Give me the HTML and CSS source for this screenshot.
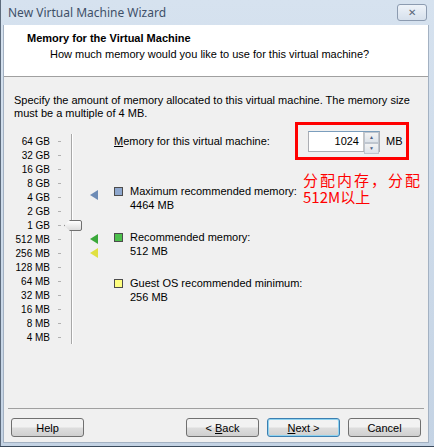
FILE: index.html
```html
<!DOCTYPE html>
<html lang="en">
<head>
    <meta charset="UTF-8">
    <title>New Virtual Machine Wizard</title>
    <link rel="stylesheet" href="styles.css">
</head>
<body>
    <div class="window">
        <div class="titlebar">
            <span class="title">New Virtual Machine Wizard</span>
            <span class="close">&#x2715;</span>
        </div>

        <div class="client">
            <div class="header">
                <h1>Memory for the Virtual Machine</h1>
                <p>How much memory would you like to use for this virtual machine?</p>
            </div>

            <div class="content">
                <p class="intro">Specify the amount of memory allocated to this virtual machine. The memory size must be a multiple of 4 MB.</p>

                <div class="memory">
                    <!-- slider scale -->
                    <div class="scale">
                        <div class="row"><span class="lbl">64 GB</span><span class="tick"></span><span class="track"></span><span class="mark"></span></div>
                        <div class="row"><span class="lbl">32 GB</span><span class="tick"></span><span class="track"></span><span class="mark"></span></div>
                        <div class="row"><span class="lbl">16 GB</span><span class="tick"></span><span class="track"></span><span class="mark"></span></div>
                        <div class="row"><span class="lbl">8 GB</span><span class="tick"></span><span class="track"></span><span class="mark"></span></div>
                        <div class="row"><span class="lbl">4 GB</span><span class="tick"></span><span class="track"></span><span class="mark"><span class="arrow blue up"></span></span></div>
                        <div class="row"><span class="lbl">2 GB</span><span class="tick"></span><span class="track"></span><span class="mark"></span></div>
                        <div class="row"><span class="lbl">1 GB</span><span class="tick"></span><span class="track"><span class="thumb"></span></span><span class="mark"></span></div>
                        <div class="row"><span class="lbl">512 MB</span><span class="tick"></span><span class="track"></span><span class="mark"><span class="arrow green"></span></span></div>
                        <div class="row"><span class="lbl">256 MB</span><span class="tick"></span><span class="track"></span><span class="mark"><span class="arrow yellow"></span></span></div>
                        <div class="row"><span class="lbl">128 MB</span><span class="tick"></span><span class="track"></span><span class="mark"></span></div>
                        <div class="row"><span class="lbl">64 MB</span><span class="tick"></span><span class="track"></span><span class="mark"></span></div>
                        <div class="row"><span class="lbl">32 MB</span><span class="tick"></span><span class="track"></span><span class="mark"></span></div>
                        <div class="row"><span class="lbl">16 MB</span><span class="tick"></span><span class="track"></span><span class="mark"></span></div>
                        <div class="row"><span class="lbl">8 MB</span><span class="tick"></span><span class="track"></span><span class="mark"></span></div>
                        <div class="row"><span class="lbl">4 MB</span><span class="tick"></span><span class="track"></span><span class="mark"></span></div>
                    </div>

                    <div class="info">
                        <div class="field">
                            <span class="field-label"><u>M</u>emory for this virtual machine:</span>
                            <div class="spin">
                                <span class="spin-value">1024</span>
                                <span class="spin-btns">
                                    <span class="spin-btn">&#9650;</span>
                                    <span class="spin-btn">&#9660;</span>
                                </span>
                            </div>
                            <span class="unit">MB</span>
                            <div class="redbox"></div>
                            <div class="note">
                                <span class="note-line">分配内存，分配</span>
                                <span class="note-line narrow">512M以上</span>
                            </div>
                        </div>

                        <div class="legend max">
                            <span class="sq blue"></span>
                            <div>Maximum recommended memory:<br>4464 MB</div>
                        </div>
                        <div class="legend rec">
                            <span class="sq green"></span>
                            <div>Recommended memory:<br>512 MB</div>
                        </div>
                        <div class="legend min">
                            <span class="sq yellow"></span>
                            <div>Guest OS recommended minimum:<br>256 MB</div>
                        </div>
                    </div>
                </div>
            </div>

            <div class="footer">
                <button class="btn">Help</button>
                <span class="spacer"></span>
                <button class="btn">&lt; <u>B</u>ack</button>
                <button class="btn default"><u>N</u>ext &gt;</button>
                <button class="btn">Cancel</button>
            </div>
        </div>
    </div>
</body>
</html>
```

FILE: styles.css
```css
body {
    margin: 0;
    background: #3b4a5c;
    font-family: 'Liberation Sans', Arial, sans-serif;
    font-size: 11px;
    color: #000;
}

.window {
    width: 434px;
    height: 446px;
    background: linear-gradient(#d6e2ef, #c4d3e4);
    border-left: 1px solid #5d6b7c;
    box-sizing: border-box;
    display: flex;
    flex-direction: column;
}

.titlebar {
    height: 25px;
    display: flex;
    align-items: center;
    justify-content: space-between;
    padding: 0 7px 0 7px;
    flex-shrink: 0;
}

.title {
    font-family: 'Noto Sans', sans-serif;
    font-size: 12px;
    color: #3f5068;
    margin-top: -1px;
}

.close {
    width: 28px;
    height: 15px;
    border: 1px solid #8c9bb0;
    border-radius: 3px;
    background: linear-gradient(#eef3f9, #d6e0ec);
    font-size: 10px;
    color: #5a6678;
    text-align: center;
    line-height: 15px;
    margin-top: -1px;
}

.client {
    flex: 1;
    margin: 0 5px 3px 2px;
    background: #f0f0f0;
    border: 1px solid #a3b1c2;
    border-top: none;
    display: flex;
    flex-direction: column;
}

.header {
    background: #fff;
    height: 52px;
    flex-shrink: 0;
    border-bottom: 1px solid #a0a0a0;
    box-sizing: border-box;
    padding: 6px 0 0 23px;
}

.header h1 {
    font-size: 11px;
    font-weight: bold;
    margin: 0;
    line-height: 14px;
}

.header p {
    margin: 2px 0 0 23px;
    line-height: 14px;
}

.content {
    flex: 1;
    padding: 17px 0 0 10px;
}

.intro {
    margin: 0;
    line-height: 13px;
    width: 410px;
}

.memory {
    display: flex;
    margin-top: 14px;
}

.scale {
    display: flex;
    flex-direction: column;
}

.row {
    height: 14px;
    display: flex;
    align-items: center;
}

.lbl {
    width: 36px;
    text-align: right;
    font-size: 10px;
}

.tick {
    width: 3px;
    height: 1px;
    background: #b0b0b0;
    margin-left: 8px;
}

.track {
    position: relative;
    width: 2px;
    height: 14px;
    margin-left: 10px;
    border-left: 1px solid #a8a8a8;
    background: #fff;
    box-sizing: border-box;
}

.thumb {
    position: absolute;
    left: -8px;
    top: 2px;
    width: 16px;
    height: 9px;
    border: 1px solid #707070;
    border-radius: 2px;
    background: linear-gradient(#ffffff, #dcdcdc);
    clip-path: polygon(6px 0, 100% 0, 100% 100%, 6px 100%, 0 50%);
}

.mark {
    width: 12px;
    margin-left: 17px;
    height: 14px;
    display: flex;
    align-items: center;
}

.arrow {
    width: 0;
    height: 0;
    border-top: 5px solid transparent;
    border-bottom: 5px solid transparent;
    border-right: 8px solid #6f8cb4;
}

.arrow.up { margin-top: -4px; }
.arrow.blue { border-right-color: #6d8bb5; }
.arrow.green { border-right-color: #3aa83a; }
.arrow.yellow { border-right-color: #e0e040; }

.info {
    margin-left: 12px;
    display: flex;
    flex-direction: column;
}

.field {
    position: relative;
    display: flex;
    align-items: center;
    height: 14px;
}

.field-label {
    width: 194px;
}

.spin {
    display: flex;
    align-items: center;
    height: 21px;
    width: 72px;
    border: 1px solid #abadb3;
    border-top-color: #7b9ebd;
    background: #fff;
    box-sizing: border-box;
}

.spin-value {
    flex: 1;
    text-align: right;
    padding-right: 4px;
}

.spin-btns {
    display: flex;
    flex-direction: column;
    width: 15px;
    height: 19px;
    border-left: 1px solid #c5c5c5;
}

.spin-btn {
    flex: 1;
    font-size: 5px;
    color: #4d6185;
    text-align: center;
    line-height: 9px;
    background: linear-gradient(#f3f3f3, #dde3ea);
    border: 1px solid #bfc6cf;
}

.unit {
    margin-left: 6px;
}

.redbox {
    position: absolute;
    left: 181px;
    top: -12px;
    width: 114px;
    height: 38px;
    border: 3px solid #ff0000;
    box-sizing: border-box;
}

.note {
    position: absolute;
    left: 189px;
    top: 37px;
    display: flex;
    flex-direction: column;
    color: #ff0000;
    font-family: 'Noto Sans CJK SC', sans-serif;
    font-size: 15px;
    line-height: 17px;
    white-space: nowrap;
}

.note-line {
    letter-spacing: 2px;
}

.note-line.narrow {
    letter-spacing: 0;
}

.legend {
    display: flex;
    align-items: flex-start;
    line-height: 14px;
}

.legend.max { margin-top: 36px; }
.legend.rec { margin-top: 18px; }
.legend.min { margin-top: 18px; }

.sq {
    width: 7px;
    height: 7px;
    margin: 3px 7px 0 0;
    border: 1px solid #4c4c4c;
}

.sq.blue { background: #8ea7cd; }
.sq.green { background: #4cc04c; }
.sq.yellow { background: #ffff80; }

.footer {
    display: flex;
    align-items: flex-start;
    gap: 8px;
    height: 34px;
    flex-shrink: 0;
    margin: 0 4px;
    border-top: 1px solid #a0a0a0;
    box-sizing: border-box;
    padding: 9px 3px 0 3px;
}

.spacer {
    flex: 1;
}

.btn {
    width: 73px;
    height: 19px;
    font-family: 'Liberation Sans', Arial, sans-serif;
    font-size: 11px;
    color: #000;
    border: 1px solid #707070;
    border-radius: 3px;
    background: linear-gradient(#f2f2f2 45%, #dddddd 55%, #cfcfcf);
    padding: 0;
}

.btn.default {
    border-color: #3c7fb1;
    box-shadow: inset 0 0 0 1px #8fd3f0;
}
```
